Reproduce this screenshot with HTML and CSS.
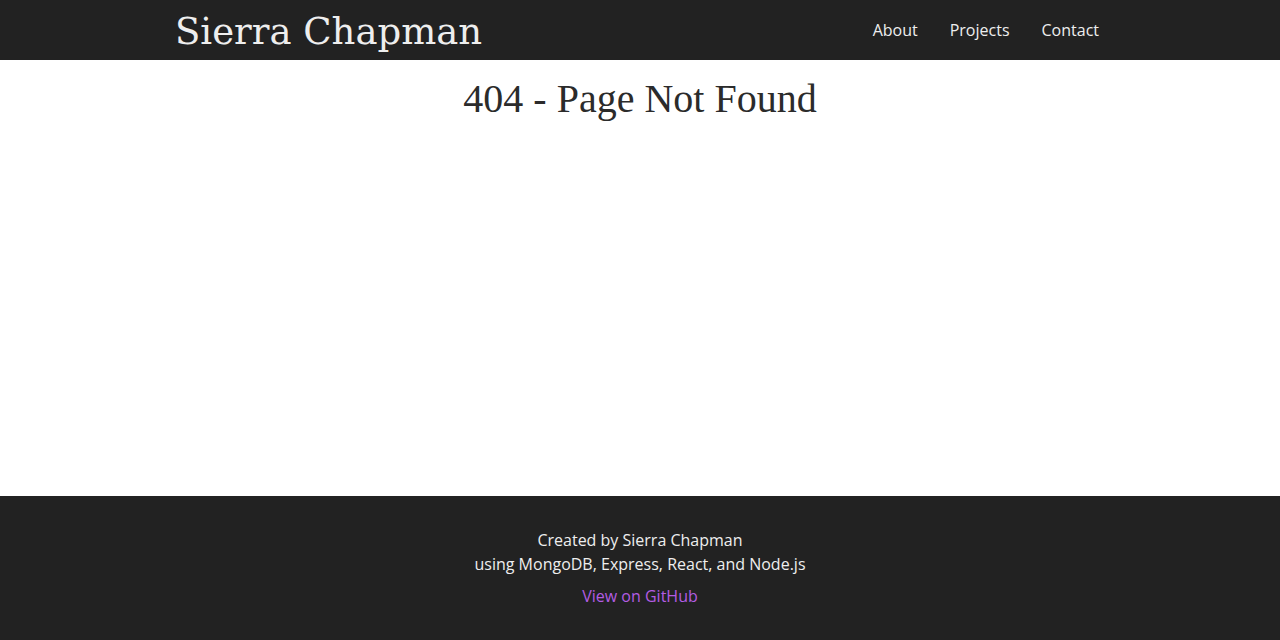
FILE: index.html
```html
<!DOCTYPE html>
<html lang="en">
<head>
<meta charset="utf-8">
<title>Sierra Chapman</title>
<link rel="stylesheet" href="styles.css">
</head>
<body>
<div class="page">
  <header class="site-header">
    <div class="header-inner">
      <a class="brand" href="#">Sierra Chapman</a>
      <nav class="nav">
        <a class="nav-link" href="#">About</a>
        <a class="nav-link" href="#">Projects</a>
        <a class="nav-link" href="#">Contact</a>
      </nav>
    </div>
  </header>
  <main class="main">
    <h1 class="title">404 - Page Not Found</h1>
  </main>
  <footer class="site-footer">
    <p class="credit">Created by Sierra Chapman<br>using MongoDB, Express, React, and Node.js</p>
    <a class="github" href="#">View on GitHub</a>
  </footer>
</div>
</body>
</html>
```
FILE: styles.css
```css
* { box-sizing: border-box; }
html, body { margin: 0; padding: 0; }
body {
  font-family: "Open Sans", "Noto Sans", sans-serif;
  font-size: 16px;
  color: #222;
  background: #fff;
}
.page {
  min-height: 640px;
  display: flex;
  flex-direction: column;
}
.site-header {
  background: #222;
  height: 60px;
}
.header-inner {
  width: 960px;
  margin: 0 auto;
  height: 60px;
  display: flex;
  align-items: center;
  justify-content: space-between;
  padding-left: 15px;
}
.brand {
  font-family: "DejaVu Serif", "Liberation Serif", serif;
  font-size: 37px;
  color: #eee;
  text-decoration: none;
  line-height: 60px;
  padding-top: 3px;
}
.nav {
  display: flex;
  margin-right: 5px;
}
.nav-link {
  color: #eee;
  text-decoration: none;
  padding: 0 16px;
  line-height: 60px;
}
.main {
  flex: 1;
  text-align: center;
}
.title {
  margin: 14px 0 0;
  font-family: "Liberation Serif", "DejaVu Serif", serif;
  font-weight: normal;
  font-size: 40px;
  line-height: 50px;
  color: #2b2b2b;
}
.site-footer {
  background: #222;
  height: 144px;
  display: flex;
  flex-direction: column;
  align-items: center;
  padding-top: 32px;
}
.credit {
  margin: 0;
  color: #eee;
  text-align: center;
  line-height: 24px;
}
.github {
  margin-top: 8px;
  color: #b35ce3;
  text-decoration: none;
  line-height: 24px;
}
```
